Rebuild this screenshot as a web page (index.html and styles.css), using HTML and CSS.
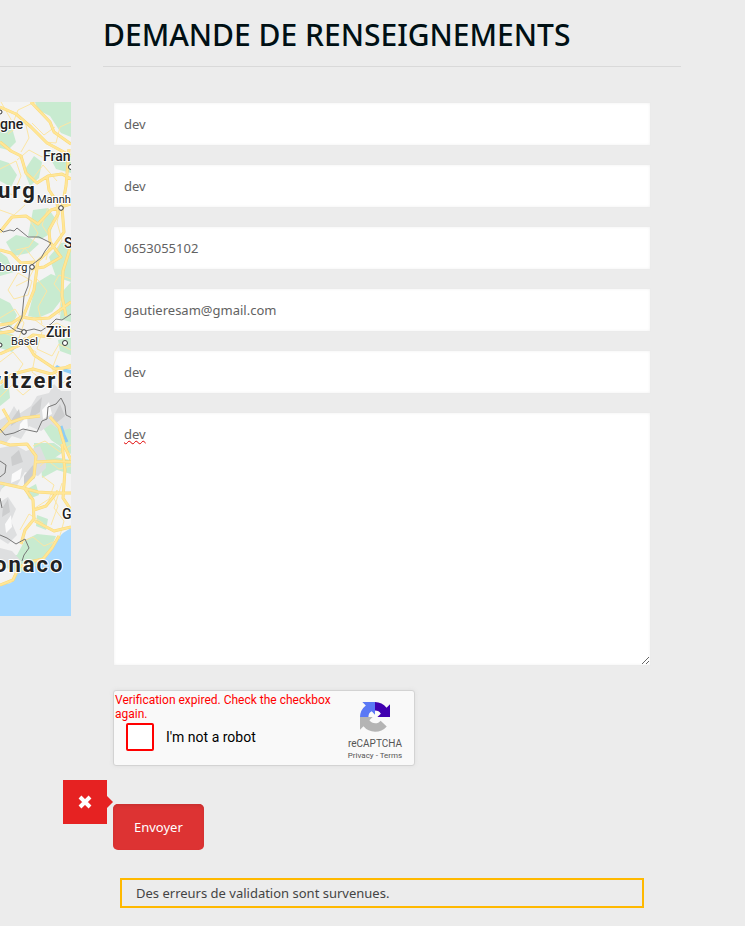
FILE: index.html
```html
<!DOCTYPE html>
<html lang="fr">
<head>
<meta charset="utf-8">
<meta name="viewport" content="width=device-width, initial-scale=1">
<title>Demande de renseignements</title>
<link rel="stylesheet" href="styles.css">
</head>
<body>
<main class="page">
  <section class="location">
    <div class="section-head"></div>
    <svg class="map" viewBox="0 0 71 514" preserveAspectRatio="xMinYMin slice" role="img" aria-label="Carte">
      <rect width="71" height="514" fill="#f3f3f3"/>
      <g fill="#c8ebd0">
        <path d="M35 0H71V35L61 31 50 14 38 8ZM0 20l12 6 4 14-8 8-8-2ZM34 54l8 6-3 16-9 8-6-15ZM0 58l9 3 8 12-6 12-11-6ZM46 48l16 4 9-1V71l-15-4ZM33 108l15-2 7 10-5 16-9 5-13-3ZM6 140l10-7 14 3 9 6-10 9-15 3ZM49 155l12-14 10-1v40l-15-5ZM0 150l7 5 7 15-14 4ZM36 181l15-9 10 4 1 21-10 13-14 6-10-2ZM0 196l10 5 7 12-6 12-11-5ZM62 190l9-10v40l-11-3ZM0 228l12 4 9 8-9 10-12-4ZM58 238l13-3v18l-11-4ZM0 284l8-7 2 19-10 8Z"/>
        <path d="M0 355l8 7-3 22-5 4ZM34 341h20l11 8-18 12-13-4ZM41 362l13-7 17 3v14l-14-4-15 8ZM25 388l11-6 3 11-10 4ZM37 413l11 4-2 11-10-4ZM0 454l17-1 8-15 12-6 19 2-9 21-15 15-12 2-20-9ZM38 318l19-3 14 12v25l-20-14ZM58 300l13-5v24l-11-2Z"/>
      </g>
      <g fill="#dedfe0">
        <path d="M0 318l9-5 5-9 5 8 12-8 6-10 12-3 5-9 7 7 10 0v37l-10 3-10-7-10 7-12-5-8 13-9-3-6 7-6-2ZM0 346l15-3 11 6 14-5 6 14 0 8-8 8-13-4-9 15-12-4-5 12-10-4ZM0 400l8-5 8 12-5 12 6 14-9 9-8-5ZM0 446l12 3 9 10-10 5-11-4Z"/>
      </g>
      <g fill="#cccdce"><path d="M12 317l7-10 2 10-10 7ZM32 305l10-10-2 15-11 7ZM52 317l8-15 5 12-10 8ZM11 355l8-7 4 12-11 4ZM24 374l9-11 2 13-11 8ZM3 405l5-8 2 13-8 5Z"/></g>
      <g fill="#fafafa"><path d="M20 322l7-8 1 12-9 4ZM42 308l7-8 3 12-9 5ZM12 372l10-6-2 11-9 4ZM5 422l6-9 1 12-6 6Z"/></g>
      <path d="M57 263l5 3 9 2v4l-9-3-7-4Z" fill="#8ecdf5"/>
      <path d="M61 324l3 9 3 7" fill="none" stroke="#8ecdf5" stroke-width="3"/>
      <path d="M71 426l-8 5-8 8-5 10-7 11-9 5-11 4-7 3-5 9-11 2v31h71Z" fill="#a8d9ff"/>
      <g class="roads minor-roads">
        <path d="M1 0l12 21 5-13 17-8M8 32l17-13 4 17-8 14M32 21l12 12 11-8M0 67l16-8 5 15-8 19-13-5M32 78l11-15 14 16M0 108l14 5 11-10M27 114l11 17-9 14-13 3M48 106l-6 17 9 14-5 21M61 104l-4 16 5 18-6 12M17 156l8-10 12 15-9 17-12 6M8 188l10-17 14 8-4 14-14 4ZM37 177l10 12-9 16 4 17M71 177l-12-4-5 9 8 10-3 21M0 216l15-9 9 14-5 15-19-6M31 215l15 11 11-5 14 8M0 260l13-10 10 12-8 12M23 242l13 8-4 20 14 11M42 230l-5 17 15 7 7-12 12 6M0 295l12-12 11 10 18-15 12 6M59 249l-7 18 11 14 8-7M33 344l12-5 15 11 11-7M40 364l7-6 12 9 12-3M42 374l12 9-5 14-14 9M51 391l7 13-7 19M62 381l-8 25 10 13-5 18M20 428l9-16 14 9M21 440l12-5 11 9 14-6M17 58l12-10 13 7 14-4M71 20l-11 5-4 16-11-1"/>
      </g>
      <g class="roads road-edge">
        <path d="M0 5l16 7 15 13 16 16 24 13M31 0l19 20 4 10 17 12M0 40l11 9 10 5 5 17 11 10 11-7 14-2 9 5M47 74l2 14 8 12 1 12-9 16 1 12 11 15-17 10-13 2M0 130l12-15 14-1 12 8 13-14 20-6M69 47l-3 37-4 21 2 25-10 14-16 15-4 29-11 27-10 14-13 2M0 148l11 3 10 10 14-1M71 143l-8 26-1 25 4 20M0 223l12-2 9-6 13 2 15-1 22-16M0 252l18-8 15-11 17 2 21-7M24 236l10 17 21 14 16-2M0 281l13-9 20-5 18 5 20-9M0 330l9-9 14-5 17-2M50 315l9 10 6 20 6 13M3 307l8 14M0 340l10 3 17-1 9 12-2 20-11 12-23-5M36 360l19-1 16 1M62 342l3 26-2 28 8 12M23 386l15 4 15 1h18M25 387l8 11 1 19-9 11-4 14M34 408l12-4 12-15M35 419l19 10 17-4M59 434l-7 12-9 11-9 2-15 6-6 13-13 5"/>
      </g>
      <g class="roads major-roads">
        <path d="M0 5l16 7 15 13 16 16 24 13M31 0l19 20 4 10 17 12M0 40l11 9 10 5 5 17 11 10 11-7 14-2 9 5M47 74l2 14 8 12 1 12-9 16 1 12 11 15-17 10-13 2M0 130l12-15 14-1 12 8 13-14 20-6M69 47l-3 37-4 21 2 25-10 14-16 15-4 29-11 27-10 14-13 2M0 148l11 3 10 10 14-1M71 143l-8 26-1 25 4 20M0 223l12-2 9-6 13 2 15-1 22-16M0 252l18-8 15-11 17 2 21-7M24 236l10 17 21 14 16-2M0 281l13-9 20-5 18 5 20-9M0 330l9-9 14-5 17-2M50 315l9 10 6 20 6 13M3 307l8 14M0 340l10 3 17-1 9 12-2 20-11 12-23-5M36 360l19-1 16 1M62 342l3 26-2 28 8 12M23 386l15 4 15 1h18M25 387l8 11 1 19-9 11-4 14M34 408l12-4 12-15M35 419l19 10 17-4M59 434l-7 12-9 11-9 2-15 6-6 13-13 5"/>
      </g>
      <path class="border" d="M0 127l3 3 7-2 4 1 3-3 5 4 6 5 11 0 12 6-6 8-4 7-8 6-3 4-2 18-4 10-2 21-5 11 8 3 9-2 7 2 10-7 5-5 6 1 9-6M23 230l-7-1-7-5-9 3M0 327l5 6 9-2 9-4 14 3 5-11 5-2 1-12 8-3 5-6 4 8 1 9 6 3M0 359l6 4-1 8-5 4M0 396l2 10M0 433l7 3 9 6 9-5 4 9-5 7-2 6"/>
      <g class="places">
        <circle cx="0" cy="10" r="2"/><circle cx="71" cy="65" r="2.5"/><circle cx="61" cy="106" r="2.3"/><circle cx="32" cy="165" r="2.3"/><circle cx="24" cy="230" r="2.3"/><circle cx="65" cy="241" r="2.5"/><circle cx="0" cy="243" r="2"/>
      </g>
      <g class="labels">
        <text class="city" x="0" y="27">gne</text>
        <text class="city" x="43" y="59">Fran</text>
        <text class="country" x="-2" y="96">urg</text>
        <text class="town" x="37" y="101">Mannh</text>
        <text class="city" x="64" y="146">S</text>
        <text class="town" x="-1" y="169">bourg</text>
        <text class="town" x="11" y="243">Basel</text>
        <text class="city" x="46" y="235">Züri</text>
        <text class="country" x="-15" y="286">witzerla</text>
        <text class="city" x="62" y="417">G</text>
        <text class="country" x="-6" y="470">onaco</text>
      </g>
    </svg>
  </section>

  <section class="contact">
    <h1 class="section-head">DEMANDE DE RENSEIGNEMENTS</h1>
    <form class="form">
      <input class="field" type="text" aria-label="Nom" value="dev">
      <input class="field" type="text" aria-label="Prénom" value="dev">
      <input class="field" type="tel" aria-label="Téléphone" value="0653055102">
      <input class="field" type="email" aria-label="E-mail" value="gautieresam@gmail.com">
      <input class="field" type="text" aria-label="Sujet" value="dev">
      <textarea class="field message" aria-label="Message">dev</textarea>

      <div class="captcha">
        <div class="captcha-main">
          <p class="captcha-error">Verification expired. Check the checkbox again.</p>
          <label class="captcha-check"><input type="checkbox"><span>I'm not a robot</span></label>
        </div>
        <div class="captcha-brand">
          <svg class="captcha-logo" viewBox="0 0 64 64" aria-hidden="true">
            <path fill="#4000b0" d="M64 32V5l-7.400 7.400A32 32 0 0 0 32 0v18c6 0 10 2 12.500 7L37 32Z"/>
            <path fill="#5a78f5" d="M32 0H5l7.400 7.400A32 32 0 0 0 0 32h18c0-6 2-10 7-12.500L32 27Z"/>
            <path fill="#b4b4b4" d="M0 32v27l7.400-7.400A32 32 0 0 0 57 52L44 40c-5 7-18 8-24-1l7-7Z"/>
          </svg>
          <span class="captcha-name">reCAPTCHA</span>
          <span class="captcha-links"><a href="#">Privacy</a> - <a href="#">Terms</a></span>
        </div>
      </div>

      <div class="submit">
        <button class="send" type="submit">Envoyer</button>
        <span class="error-flag">
          <svg viewBox="0 0 14 14" aria-hidden="true"><path d="M2 2l10 10M12 2L2 12"/></svg>
        </span>
      </div>
      <p class="notice" role="alert">Des erreurs de validation sont survenues.</p>
    </form>
  </section>
</main>
</body>
</html>
```
FILE: styles.css
```css
* { box-sizing: border-box; }

body {
  margin: 0;
  background: #ececec;
  color: #444;
  font: 13px/20px "Noto Sans", sans-serif;
}

p { margin: 0; }

.page {
  display: grid;
  grid-template-columns: 71px minmax(0, 1fr);
  gap: 32px;
  padding-right: 64px;
}

.section-head {
  height: 67px;
  margin: 0 0 35px;
  padding-top: 15px;
  border-bottom: 1px solid #d9d9d9;
  color: #001014;
  font: 500 30px/40px "Noto Sans", sans-serif;
  white-space: nowrap;
}

.map {
  display: block;
  width: 100%;
  height: 514px;
}

.roads { fill: none; stroke-linejoin: round; }
.minor-roads { stroke: #fce6a4; stroke-width: 1; }
.road-edge { stroke: #fbd978; stroke-width: 3; }
.major-roads { stroke: #ffe697; stroke-width: 2; }
.border { fill: none; stroke: #777; stroke-width: 1; }
.places { fill: #fff; stroke: #333; stroke-width: 1; }

.labels {
  fill: #222;
  stroke: #fff;
  stroke-width: 2;
  stroke-linejoin: round;
  paint-order: stroke;
  font-family: Roboto, sans-serif;
}

.city { font-size: 14px; font-weight: 500; }
.town { font-size: 11px; }
.country { font-size: 22px; font-weight: 700; letter-spacing: 2px; }

.form {
  display: flex;
  flex-direction: column;
  gap: 18px;
  padding: 0 30px 0 10px;
}

.field {
  display: block;
  width: 100%;
  height: 44px;
  margin: 0;
  padding: 10px;
  border: 1px solid #ebebeb;
  border-radius: 0;
  outline: 0;
  background: #fff;
  box-shadow: inset 0 0 3px #f0f0f0;
  color: #626262;
  font: 13px/22px "Noto Sans", sans-serif;
}

.message {
  height: 254px;
  resize: vertical;
  text-decoration: underline wavy #e00000 1px;
}

.captcha {
  display: flex;
  width: 302px;
  height: 76px;
  margin-top: 6px;
  border: 1px solid #d3d3d3;
  border-radius: 3px;
  background: #f9f9f9;
  box-shadow: 0 0 4px #ddd;
  font-family: Roboto, sans-serif;
}

.captcha-main { flex: 1; padding: 2px 0 0 1px; }
.captcha-error { color: #f00; font-size: 12px; line-height: 14px; }

.captcha-check {
  display: flex;
  align-items: center;
  gap: 12px;
  margin: 2px 0 0 11px;
  color: #000;
  font-size: 14px;
}

.captcha-check input {
  appearance: none;
  width: 28px;
  height: 28px;
  margin: 0;
  border: 2px solid #f00;
  border-radius: 2px;
  background: #fff;
}

.captcha-brand {
  display: flex;
  flex-direction: column;
  align-items: center;
  width: 78px;
  padding-top: 11px;
  color: #555;
}

.captcha-logo { width: 30px; height: 30px; }
.captcha-name { margin-top: 5px; font-size: 10px; line-height: 14px; }
.captcha-links { font-size: 8px; line-height: 10px; }
.captcha-links a { color: inherit; text-decoration: none; }

.submit {
  position: relative;
  align-self: flex-start;
  margin-top: 20px;
}

.send {
  display: block;
  height: 46px;
  padding: 0 21px;
  border: 0;
  border-radius: 5px;
  background: #dd3333;
  box-shadow: inset 0 2px 3px #c93030;
  color: #fff;
  font: 13px/20px "Noto Sans", sans-serif;
}

.error-flag {
  position: absolute;
  right: 100%;
  bottom: 26px;
  display: grid;
  place-items: center;
  width: 44px;
  height: 44px;
  margin-right: 6px;
  background: #e62222;
}

.error-flag::after {
  content: "";
  position: absolute;
  left: 100%;
  border: 6px solid transparent;
  border-left-color: #e62222;
  border-right: 0;
}

.error-flag svg { width: 14px; height: 14px; }
.error-flag path { stroke: #fff; stroke-width: 4; }

.notice {
  margin: 10px 7px 0;
  padding: 3px 14px;
  border: 2px solid #ffb900;
}
```
